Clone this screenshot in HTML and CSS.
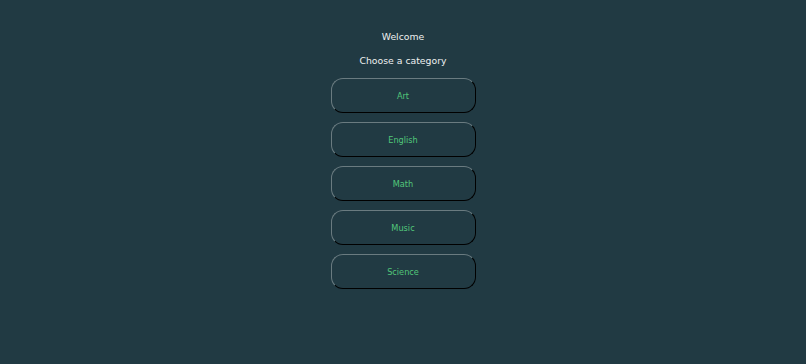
FILE: index.html
```html
<!doctype html>
<html>
<head>
  <title>Quiz</title>
  <link rel="stylesheet" href="styles.css">
</head>
<body>
  <div class="app">
    <p class="welcome">Welcome</p>
    <p class="prompt">Choose a category</p>
    <div class="categories">
      <button class="category">Art</button>
      <button class="category">English</button>
      <button class="category">Math</button>
      <button class="category">Music</button>
      <button class="category">Science</button>
    </div>
  </div>
</body>
</html>
```
FILE: styles.css
```css
html, body { margin: 0; height: 100%; }
body {
  background: #213a43;
  font-family: "DejaVu Sans", Verdana, sans-serif;
  color: #eef0f0;
}
.app {
  display: flex;
  flex-direction: column;
  align-items: center;
  padding-top: 31px;
}
.welcome, .prompt {
  margin: 0;
  font-size: 9.3px;
  line-height: 12px;
}
.prompt { margin-top: 12px; }
.categories {
  display: flex;
  flex-direction: column;
  gap: 9px;
  margin-top: 11px;
}
.category {
  width: 145px;
  height: 35px;
  border: 1.5px outset #4a5e64;
  border-top-color: #6a7b80;
  border-left-color: #6a7b80;
  border-bottom-color: #1a2b31;
  border-right-color: #1a2b31;
  border-radius: 12px;
  background: #213a43;
  color: #52c67a;
  font-family: "DejaVu Sans", Verdana, sans-serif;
  font-size: 8.2px;
  padding: 0;
}
```
